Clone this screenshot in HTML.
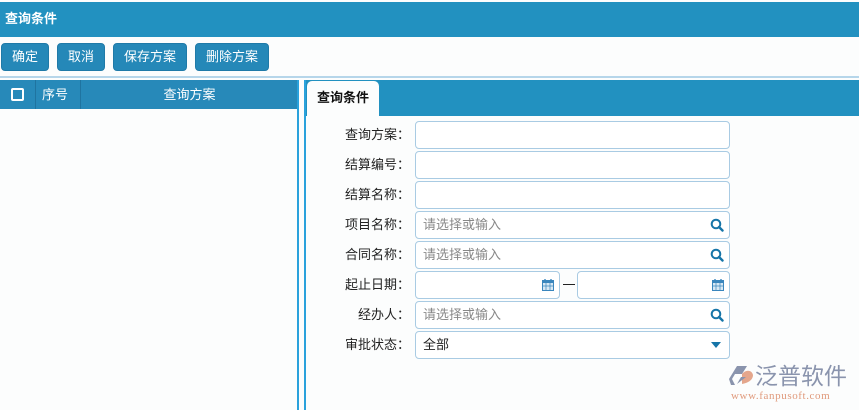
<!DOCTYPE html>
<html><head><meta charset="utf-8"><style>
*{margin:0;padding:0;box-sizing:border-box}
body{width:859px;height:410px;background:#fcfdfd;font-family:"Liberation Sans","Noto Sans CJK SC",sans-serif;font-size:13px;position:relative;overflow:hidden;color:#222}
.a{position:absolute}
.top{left:0;top:2px;width:859px;height:35px;background:#2291c0;color:#fff;font-weight:bold;font-size:13px;line-height:33px;padding-left:5px}
.btn{top:43px;height:28px;background:#2588b8;border:1px solid #1f7aa8;border-radius:4px;color:#fff;line-height:26px;text-align:center;font-size:13px}
.sep{left:0;top:76px;width:859px;height:2px;background:#b6d6ea}
.lh{left:0;top:80px;width:298px;height:29px;background:#2789b9;color:#fff;line-height:29px}
.lb{left:297px;top:80px;width:2px;height:330px;background:#2aa2dc}
.rb{left:304px;top:80px;width:2px;height:330px;background:#2aa2dc}
.rh{left:305px;top:80px;width:554px;height:36px;background:#2291c0}
.tab{left:307px;top:81px;width:72px;height:36px;background:#fcfdfd;border-radius:5px 5px 0 0;font-weight:bold;line-height:33px;text-align:center;color:#111}
.lbl{left:300px;width:110px;text-align:right;line-height:28px;color:#222}
.in{left:415px;width:315px;height:28px;border:1px solid #a9cbe3;border-radius:4px;background:#fff;line-height:26px;padding-left:7px;color:#888}
.ic{position:absolute;right:5px;top:6px}
</style></head><body>
<div class="a top">查询条件</div>
<div class="a btn" style="left:1px;width:48px">确定</div>
<div class="a btn" style="left:57px;width:48px">取消</div>
<div class="a btn" style="left:113px;width:74px">保存方案</div>
<div class="a btn" style="left:195px;width:74px">删除方案</div>
<div class="a sep"></div>
<div class="a lh">
<div class="a" style="left:11px;top:8px;width:13px;height:13px;border:2px solid #fff;border-radius:2px"></div>
<div class="a" style="left:35px;top:0;width:1px;height:29px;background:#1f74a0"></div>
<div class="a" style="left:42px;top:0">序号</div>
<div class="a" style="left:80px;top:0;width:1px;height:29px;background:#1f74a0"></div>
<div class="a" style="left:81px;top:0;width:217px;text-align:center">查询方案</div>
</div>
<div class="a lb"></div>
<div class="a rh"></div>
<div class="a rb"></div>
<div class="a tab">查询条件</div>

<div class="a lbl" style="top:121px">查询方案：</div><div class="a in" style="top:121px"></div>
<div class="a lbl" style="top:151px">结算编号：</div><div class="a in" style="top:151px"></div>
<div class="a lbl" style="top:181px">结算名称：</div><div class="a in" style="top:181px"></div>
<div class="a lbl" style="top:211px">项目名称：</div><div class="a in" style="top:211px">请选择或输入<svg class="ic" width="14" height="14" viewBox="0 0 14 14"><circle cx="6" cy="6" r="4.3" fill="none" stroke="#1675a8" stroke-width="2"/><path d="M9 9l3.5 3.5" stroke="#1675a8" stroke-width="2.4" stroke-linecap="round"/></svg></div>
<div class="a lbl" style="top:241px">合同名称：</div><div class="a in" style="top:241px">请选择或输入<svg class="ic" width="14" height="14" viewBox="0 0 14 14"><circle cx="6" cy="6" r="4.3" fill="none" stroke="#1675a8" stroke-width="2"/><path d="M9 9l3.5 3.5" stroke="#1675a8" stroke-width="2.4" stroke-linecap="round"/></svg></div>
<div class="a lbl" style="top:271px">起止日期：</div>
<div class="a in" style="top:271px;width:145px"><svg class="ic" width="12" height="13" viewBox="0 0 12 13"><rect x="0.5" y="2.5" width="11" height="10" fill="#d7e8f4" stroke="#3a86bd"/><rect x="0.5" y="2.5" width="11" height="2.5" fill="#3a86bd"/><path d="M3 1v3M9 1v3" stroke="#3a86bd" stroke-width="1.4"/><path d="M0.5 8h11M4 5v7.5M8 5v7.5" stroke="#3a86bd" stroke-width=".7"/></svg></div>
<div class="a" style="left:563px;top:284px;width:12px;height:1px;background:#222"></div>
<div class="a in" style="top:271px;left:577px;width:153px"><svg class="ic" width="12" height="13" viewBox="0 0 12 13"><rect x="0.5" y="2.5" width="11" height="10" fill="#d7e8f4" stroke="#3a86bd"/><rect x="0.5" y="2.5" width="11" height="2.5" fill="#3a86bd"/><path d="M3 1v3M9 1v3" stroke="#3a86bd" stroke-width="1.4"/><path d="M0.5 8h11M4 5v7.5M8 5v7.5" stroke="#3a86bd" stroke-width=".7"/></svg></div>
<div class="a lbl" style="top:301px">经办人：</div><div class="a in" style="top:301px">请选择或输入<svg class="ic" width="14" height="14" viewBox="0 0 14 14"><circle cx="6" cy="6" r="4.3" fill="none" stroke="#1675a8" stroke-width="2"/><path d="M9 9l3.5 3.5" stroke="#1675a8" stroke-width="2.4" stroke-linecap="round"/></svg></div>
<div class="a lbl" style="top:331px">审批状态：</div><div class="a in" style="top:331px;color:#222">全部<svg class="ic" style="top:10px;right:8px" width="10" height="6" viewBox="0 0 10 6"><path d="M0 0h10L5 6z" fill="#1675a8"/></svg></div>

<svg class="a" style="left:729px;top:365px" width="26" height="22" viewBox="0 0 26 22"><path d="M8 1h10l-5 8H6l-3 5 3 6H2l-2-6z" fill="#8a94ad"/><path d="M13 9c4-5 10-4 11 1 0 5-5 8-11 9z" fill="#e4a68c"/><path d="M8 19l4-7h5z" fill="#8a94ad"/></svg>
<div class="a" style="left:755px;top:363px;font-size:23px;color:#8a94ad;line-height:26px">泛普软件</div>
<div class="a" style="left:731px;top:390px;font-family:'Liberation Serif',serif;font-size:11px;color:#e09a7c;letter-spacing:0.6px">www.fanpusoft.com</div>
</body></html>
